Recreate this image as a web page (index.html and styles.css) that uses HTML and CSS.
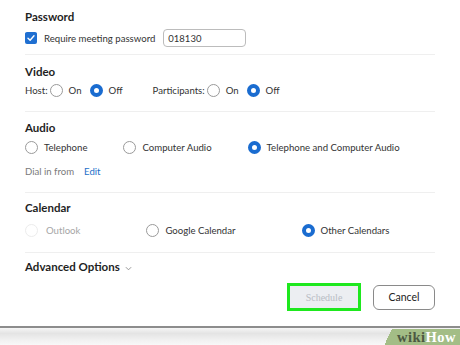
FILE: index.html
```
<!DOCTYPE html>
<html lang="en">
<head>
<meta charset="UTF-8" />
<meta name="viewport" content="width=device-width, initial-scale=1" />
<title>Schedule Meeting</title>
<link rel="stylesheet" href="styles.css">
</head>
<body>
<div class="dialog">
  <section class="section">
    <h3 class="section-title">Password</h3>
    <div class="row">
      <span class="checkbox checked">
        <svg viewBox="0 0 12 12" aria-hidden="true"><path d="M3 6.2 L5.1 8.2 L9 3.8" fill="none" stroke="#fff" stroke-width="1.4" stroke-linecap="round" stroke-linejoin="round"/></svg>
      </span>
      <span class="label">Require meeting password</span>
      <input class="text-input" type="text" value="018130">
    </div>
  </section>

  <section class="section section-video">
    <h3 class="section-title">Video</h3>
    <div class="row">
      <div class="group">
        <span class="label">Host:</span>
        <span class="radio"></span><span class="label">On</span>
        <span class="radio checked"></span><span class="label">Off</span>
      </div>
      <div class="group">
        <span class="label">Participants:</span>
        <span class="radio"></span><span class="label">On</span>
        <span class="radio checked"></span><span class="label">Off</span>
      </div>
    </div>
  </section>

  <section class="section section-audio">
    <h3 class="section-title">Audio</h3>
    <div class="row options audio-options">
      <label class="option"><span class="radio"></span><span class="label">Telephone</span></label>
      <label class="option"><span class="radio"></span><span class="label">Computer Audio</span></label>
      <label class="option"><span class="radio checked"></span><span class="label">Telephone and Computer Audio</span></label>
    </div>
    <div class="row dial-row">
      <span class="muted">Dial in from</span>
      <a class="link" href="#">Edit</a>
    </div>
  </section>

  <section class="section section-calendar">
    <h3 class="section-title">Calendar</h3>
    <div class="row options calendar-options">
      <label class="option disabled"><span class="radio"></span><span class="label">Outlook</span></label>
      <label class="option"><span class="radio"></span><span class="label">Google Calendar</span></label>
      <label class="option"><span class="radio checked"></span><span class="label">Other Calendars</span></label>
    </div>
  </section>

  <div class="advanced">
    <span class="section-title">Advanced Options</span>
    <svg class="chevron" viewBox="0 0 8 5" aria-hidden="true"><path d="M1 1 L4 4 L7 1" fill="none" stroke="#888" stroke-width="1"/></svg>
  </div>

  <div class="actions">
    <span class="highlight"><button class="btn btn-schedule" disabled>Schedule</button></span>
    <button class="btn btn-cancel">Cancel</button>
  </div>
</div>

<div class="footer">
  <div class="wikihow"><span class="wiki">wiki</span><span class="how">How</span></div>
</div>
</body>
</html>
```

FILE: styles.css
```
body {
  margin: 0;
  background: #fff;
  font-family: 'Lato', 'Noto Sans', sans-serif;
  font-size: 9.6px;
  color: #2b2b2b;
}
.dialog {
  padding: 0 25px;
}
.section {
  border-bottom: 1px solid #efefef;
  padding: 9px 0 6px;
}
.section-title {
  margin: 0;
  font-size: 11.5px;
  font-weight: bold;
  line-height: 16px;
  color: #1f1f1f;
}
.row {
  display: flex;
  align-items: center;
  height: 20px;
  margin-top: 3px;
}
.label {
  white-space: nowrap;
  color: #333;
}
.checkbox {
  width: 12px;
  height: 12px;
  border-radius: 2px;
  background: #1f6fd1;
  display: inline-flex;
  margin-right: 7px;
}
.checkbox svg {
  width: 12px;
  height: 12px;
}
.text-input {
  margin-left: 8px;
  width: 83px;
  height: 18px;
  box-sizing: border-box;
  border: 1px solid #bcbcbc;
  border-radius: 4px;
  padding: 0 4px;
  font-family: inherit;
  font-size: 9.5px;
  color: #333;
}
.radio {
  width: 13px;
  height: 13px;
  box-sizing: border-box;
  border: 1px solid #9a9a9a;
  border-radius: 50%;
  background: #fff;
  flex: none;
}
.radio.checked {
  border: 4px solid #1a6cd0;
}

/* video */
.section-video {
  padding-bottom: 12px;
}
.section-video .row {
  margin-top: 1px;
  height: 18px;
}
.group {
  display: flex;
  align-items: center;
  margin-right: 30px;
}
.group .radio {
  margin: 0 6px 0 2px;
}
.group .radio.checked {
  margin-left: 8px;
}

/* audio */
.section-audio {
  padding: 8px 0 12px;
}
.options {
  height: 18px;
  margin-top: 2px;
}
.option {
  display: flex;
  align-items: center;
  gap: 6px;
}
.audio-options {
  gap: 36px;
}
.dial-row {
  margin-top: 6px;
  height: 18px;
  gap: 10px;
}
.muted {
  color: #7a7a7a;
}
.link {
  color: #1d6fc9;
  text-decoration: none;
}

/* calendar */
.section-calendar {
  padding: 7px 0 13px;
}
.calendar-options {
  margin-top: 5px;
  gap: 66px;
}
.option.disabled .radio {
  border-color: #ececec;
}
.option.disabled .label {
  color: #a6a6a6;
  margin-left: 2px;
}

.advanced {
  display: flex;
  align-items: center;
  gap: 5px;
  padding-top: 6px;
}
.chevron {
  width: 7px;
  height: 5px;
  margin-top: 3px;
}

.actions {
  display: flex;
  justify-content: flex-end;
  align-items: center;
  margin-top: 8px;
}
.highlight {
  display: inline-flex;
  border: 3px solid #1ee81e;
  width: 74px;
  height: 28px;
  box-sizing: border-box;
}
.btn {
  font-family: inherit;
  cursor: pointer;
}
.btn-schedule {
  flex: 1;
  border: none;
  background: #eceef2;
  color: #b8bcc4;
  font-family: 'Liberation Serif', serif;
  font-size: 10px;
  padding: 0;
}
.btn-cancel {
  margin-left: 12px;
  width: 62px;
  height: 25px;
  border: 1px solid #8a8a8a;
  border-radius: 6px;
  background: #fff;
  color: #222;
  font-size: 10.5px;
}

.footer {
  display: flex;
  justify-content: flex-end;
  align-items: flex-start;
  margin-top: 15px;
  height: 18px;
  border-top: 2px solid #8d8d8d;
  background: linear-gradient(#f6f6f6, #e4e4e4 30%, #f2f2f2 70%, #fafafa);
}
.wikihow {
  margin-top: 1px;
  height: 16px;
  padding: 0 4px 0 14px;
  background: linear-gradient(115deg, transparent 8px, #a3bd86 8px);
  font-family: 'Liberation Serif', serif;
  font-weight: bold;
  font-size: 14.5px;
  line-height: 16px;
  letter-spacing: 0.5px;
}
.wiki {
  color: #4c5842;
}
.how {
  color: #fff;
}
```
